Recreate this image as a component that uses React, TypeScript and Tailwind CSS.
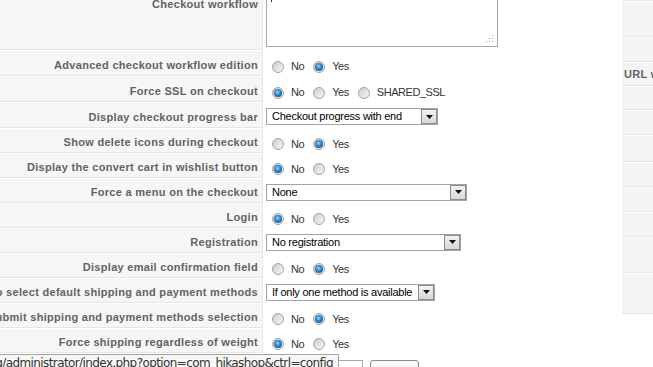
import React from "react";

type Row =
  | { label: string; h: number; kind: "textarea" }
  | { label: string; h: number; kind: "radio"; opts: string[]; checked: number }
  | { label: string; h: number; kind: "select"; value: string; w: number }
  | { label: string; h: number; kind: "tail" };

const rows: Row[] = [
  { label: "Checkout workflow", h: 93, kind: "textarea" },
  { label: "Advanced checkout workflow edition", h: 26, kind: "radio", opts: ["No", "Yes"], checked: 1 },
  { label: "Force SSL on checkout", h: 26, kind: "radio", opts: ["No", "Yes", "SHARED_SSL"], checked: 0 },
  { label: "Display checkout progress bar", h: 26, kind: "select", value: "Checkout progress with end", w: 172 },
  { label: "Show delete icons during checkout", h: 25, kind: "radio", opts: ["No", "Yes"], checked: 1 },
  { label: "Display the convert cart in wishlist button", h: 25, kind: "radio", opts: ["No", "Yes"], checked: 0 },
  { label: "Force a menu on the checkout", h: 25, kind: "select", value: "None", w: 201 },
  { label: "Login", h: 25, kind: "radio", opts: ["No", "Yes"], checked: 0 },
  { label: "Registration", h: 25, kind: "select", value: "No registration", w: 195 },
  { label: "Display email confirmation field", h: 25, kind: "radio", opts: ["No", "Yes"], checked: 1 },
  { label: "Auto select default shipping and payment methods", h: 25, kind: "select", value: "If only one method is available", w: 169 },
  { label: "Auto submit shipping and payment methods selection", h: 25, kind: "radio", opts: ["No", "Yes"], checked: 1 },
  { label: "Force shipping regardless of weight", h: 25, kind: "radio", opts: ["No", "Yes"], checked: 0 },
  { label: "Checkout", h: 30, kind: "tail" },
];

const sideRows = [2, 36, 25, 24, 24, 25, 27, 25, 25, 25, 36, 41];

function Radio({ checked }: { checked: boolean }) {
  return (
    <span className="relative inline-block w-[12px] h-[12px] shrink-0 rounded-full border border-[#a3a3a3] bg-[linear-gradient(135deg,#cdcdcd,#f6f6f6)]">
      {checked && (
        <span className="absolute left-[1px] top-[1px] w-[8px] h-[8px] rounded-full bg-[radial-gradient(circle_at_45%_40%,#a9dcf7_0%,#3a8fd0_35%,#105a9c_75%,#0a3d6b_100%)]" />
      )}
    </span>
  );
}

function Select({ value, w }: { value: string; w: number }) {
  return (
    <div
      className="flex items-stretch h-[17px] border border-[#a2a2a2] bg-white"
      style={{ width: w }}
    >
      <div className="flex-1 flex items-center pl-[5px] text-[11px] tracking-[-0.25px] text-black whitespace-nowrap overflow-hidden">
        {value}
      </div>
      <div className="w-[16px] m-0 flex items-center justify-center border border-[#8c8c8c] bg-[linear-gradient(#f2f2f2,#d8d8d8)]">
        <svg width="7" height="4" viewBox="0 0 7 4">
          <path d="M0 0h7L3.5 4z" fill="#111" />
        </svg>
      </div>
    </div>
  );
}

function Value({ row }: { row: Row }) {
  if (row.kind === "textarea") {
    return (
      <div className="relative w-[232px] h-[86px] border border-[#a8a8a8] bg-white mt-[-1px]">
        <span className="absolute left-[4px] top-[37px] w-px h-[3px] bg-[#333]" />
        <svg className="absolute right-[3px] bottom-[3px]" width="9" height="9" viewBox="0 0 9 9">
          {[
            [7, 1],
            [7, 4],
            [4, 4],
            [7, 7],
            [4, 7],
            [1, 7],
          ].map(([x, y], i) => (
            <rect key={i} x={x} y={y} width="1" height="1" fill="#a0a0a0" />
          ))}
        </svg>
      </div>
    );
  }
  if (row.kind === "radio") {
    return (
      <div className="flex items-center pl-[6px] pt-[5px] text-[11px] tracking-[-0.45px] text-[#333]">
        {row.opts.map((o, i) => (
          <div key={o} className={"flex items-center " + (i > 0 ? "ml-[9px]" : "")}>
            <Radio checked={i === row.checked} />
            <span className="ml-[7px] leading-none">{o}</span>
          </div>
        ))}
      </div>
    );
  }
  if (row.kind === "select") {
    return (
      <div className="pt-[1px]">
        <Select value={row.value} w={row.w} />
      </div>
    );
  }
  return (
    <div className="flex items-start self-start pt-[6px]">
      <div className="w-[97px] h-[20px] border border-[#a8a8a8] bg-white" />
      <div className="ml-[7px] w-[49px] h-[22px] rounded-[3px] border border-[#8a8a8a] bg-[linear-gradient(#fdfdfd,#e6e6e6)]" />
    </div>
  );
}

export default function App() {
  return (
    <div className="relative w-[653px] h-[367px] overflow-hidden bg-white font-['Liberation_Sans',Arial,sans-serif]">
      <div className="flex">
        <div className="w-[622px] shrink-0 flex flex-col mt-[-42px]">
          {rows.map((r) => (
            <div key={r.label} className="flex shrink-0" style={{ height: r.h }}>
              <div className="w-[263px] shrink-0 flex flex-col">
                <div
                  className={
                    "flex-1 flex items-center justify-end pr-[4px] bg-[#f6f6f6] border-r border-b border-[#e6e6e6] overflow-visible " +
                    (r.kind === "textarea" ? "pt-[2px]" : "pt-[4px]")
                  }
                >
                  <span className="whitespace-nowrap text-[11px] font-bold tracking-[0.3px] text-[#636363]">
                    {r.label}
                  </span>
                </div>
                <div className="h-px bg-white shrink-0" />
              </div>
              <div className="flex-1 flex items-center pl-[3px]">
                <Value row={r} />
              </div>
            </div>
          ))}
        </div>
        <div className="w-[200px] shrink-0 flex flex-col">
          {sideRows.map((h, i) => (
            <div key={i} className="flex flex-col shrink-0" style={{ height: h }}>
              <div className="flex-1 flex items-center pl-[2px] bg-[#f4f4f4] border-b border-[#e6e6e6] overflow-hidden">
                {i === 3 && (
                  <span className="whitespace-nowrap text-[11px] font-bold tracking-[0.3px] text-[#636363]">
                    URL when leaving the checkout
                  </span>
                )}
              </div>
              <div className="h-px bg-white shrink-0" />
            </div>
          ))}
        </div>
      </div>
      <div className="absolute left-0 top-[354px] w-[339px] h-[14px] bg-[#f7f7f7] border-t border-r border-[#a5a5a5] flex justify-end items-start overflow-hidden pr-[5px]">
        <span className="whitespace-nowrap text-[12px] leading-[14px] text-[#333] font-['DejaVu_Sans',sans-serif] tracking-[-0.6px] mt-[1px]">
          shop.org/administrator/index.php?option=com_hikashop&amp;ctrl=config
        </span>
      </div>
    </div>
  );
}
